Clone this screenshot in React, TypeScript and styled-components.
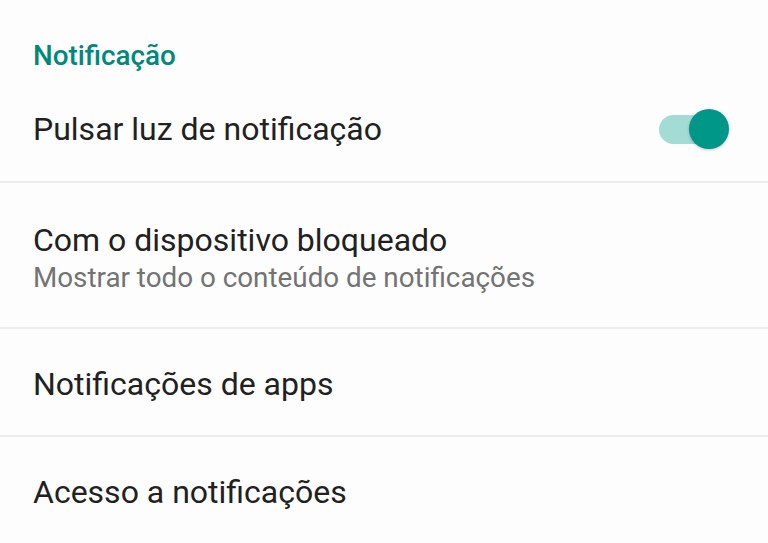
import React from "react";
import styled, { createGlobalStyle } from "styled-components";

const Global = createGlobalStyle`
  html, body { margin: 0; padding: 0; background: #fdfdfd; }
  body { font-family: Roboto, "Noto Sans", sans-serif; }
`;

const Page = styled.div`
  width: 768px;
  height: 543px;
  overflow: hidden;
  background: #fdfdfd;
  display: flex;
  flex-direction: column;
`;

const Header = styled.div`
  flex: none;
  height: 91px;
  padding: 20px 33px 0;
  display: flex;
  align-items: center;
  box-sizing: border-box;
  font-size: 27.8px;
  font-weight: 500;
  color: #00897b;
`;

const Row = styled.div<{ $h: number; $pt?: number; $pb?: number }>`
  height: ${(p) => p.$h}px;
  flex: none;
  box-sizing: border-box;
  padding: ${(p) => p.$pt ?? 0}px 51px ${(p) => p.$pb ?? 0}px 33px;
  display: flex;
  align-items: center;
  justify-content: space-between;
  border-bottom: 2px solid #ececec;
`;

const Texts = styled.div`
  display: flex;
  flex-direction: column;
`;

const Title = styled.div`
  font-size: 32px;
  color: #212121;
  line-height: 40px;
`;

const Summary = styled.div`
  font-size: 27.8px;
  color: #737373;
  line-height: 36px;
`;

const Track = styled.div`
  position: relative;
  width: 58px;
  height: 29px;
  border-radius: 15px;
  background: #a3dbd5;
`;

const Thumb = styled.div`
  position: absolute;
  right: -12px;
  top: -6px;
  width: 40px;
  height: 40px;
  border-radius: 50%;
  background: #009688;
  box-shadow: 0 1px 3px rgba(0,0,0,0.22);
`;

export default function App() {
  return (
    <Page>
      <Global />
      <Header>Notificação</Header>
      <Row $h={92} $pb={14}>
        <Texts>
          <Title>Pulsar luz de notificação</Title>
        </Texts>
        <Track>
          <Thumb />
        </Track>
      </Row>
      <Row $h={146} $pt={6}>
        <Texts>
          <Title>Com o dispositivo bloqueado</Title>
          <Summary>Mostrar todo o conteúdo de notificações</Summary>
        </Texts>
      </Row>
      <Row $h={108} $pt={4}>
        <Texts>
          <Title>Notificações de apps</Title>
        </Texts>
      </Row>
      <Row $h={112} $pt={0}>
        <Texts>
          <Title>Acesso a notificações</Title>
        </Texts>
      </Row>
    </Page>
  );
}
